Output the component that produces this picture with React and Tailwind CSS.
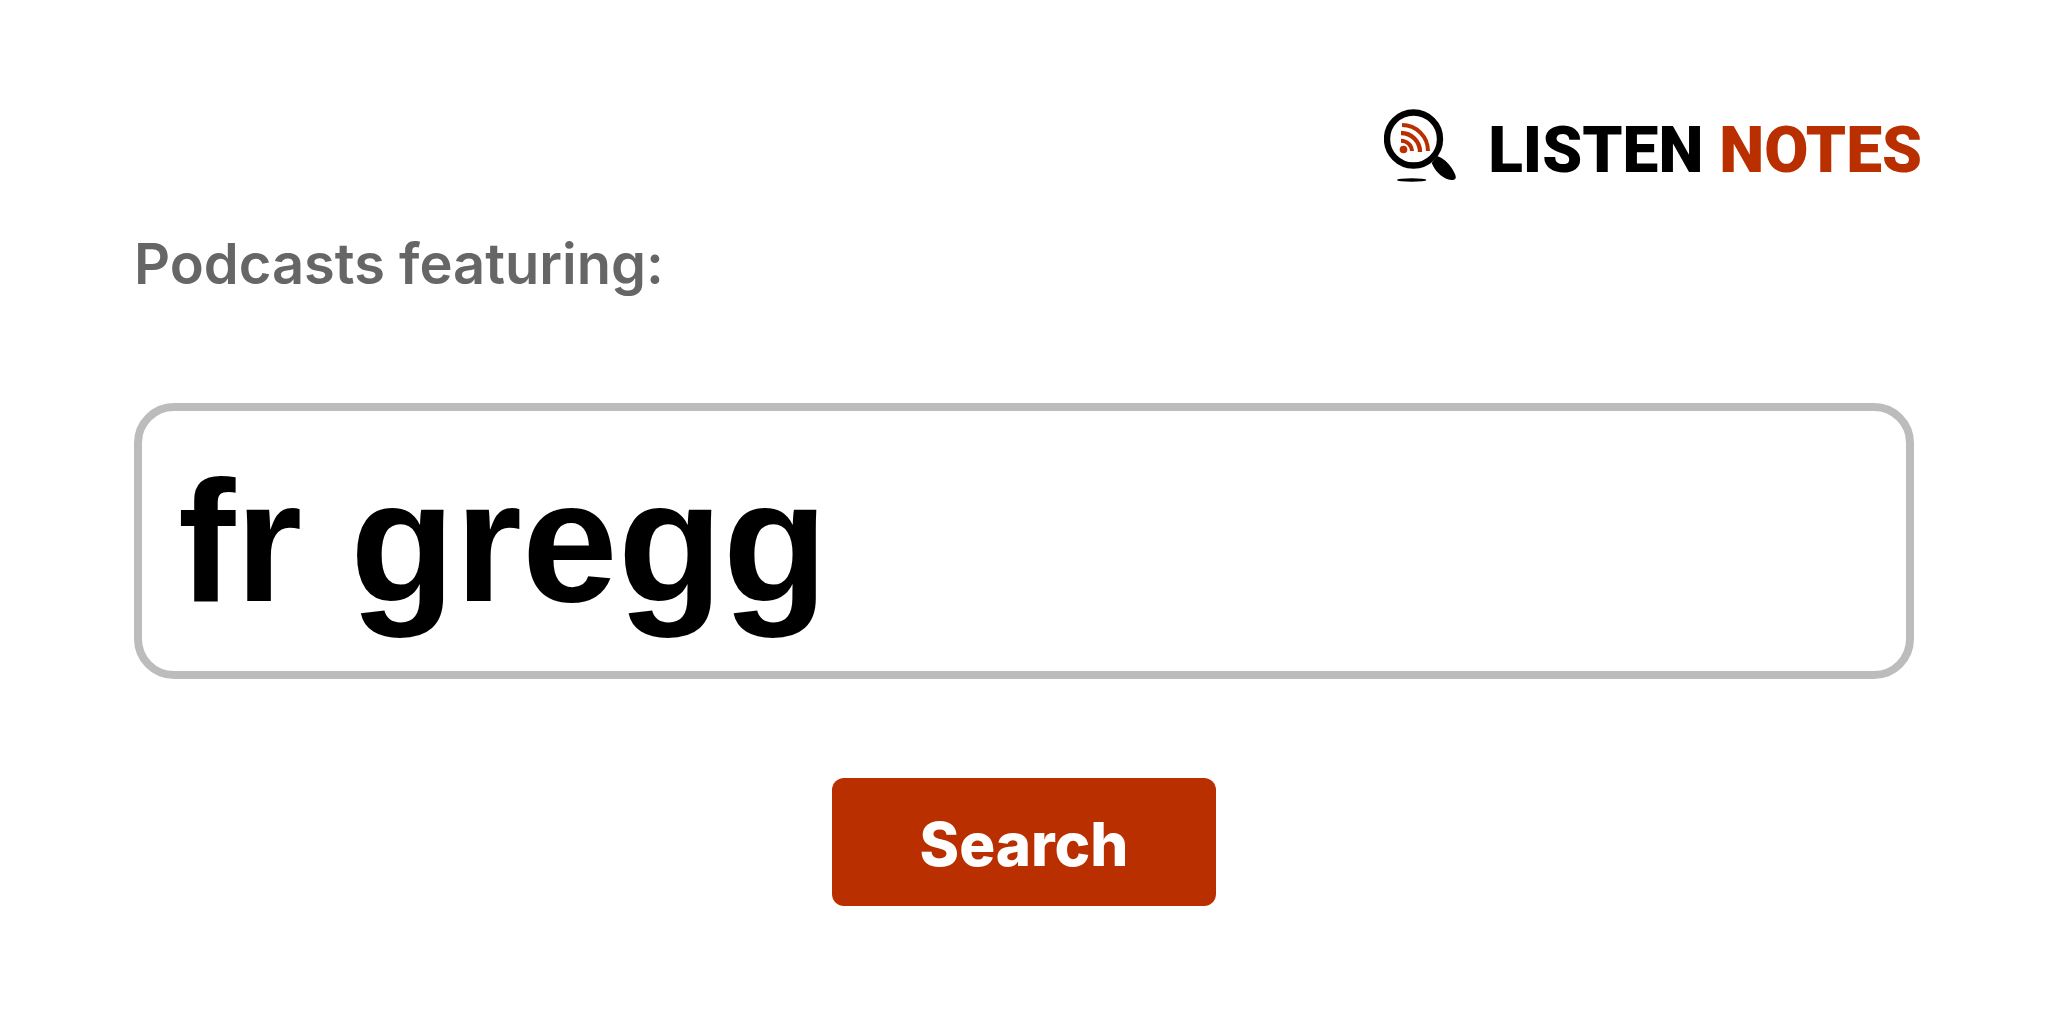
import React, { useState } from "react";

const LogoMark = () => (
  <svg viewBox="42 42 216 222" className="h-[74px] w-[72px]" aria-hidden="true">
    <circle cx="130.5" cy="132" r="79.5" fill="none" stroke="#000" strokeWidth="19" />
    {/* Handle */}
    <path
      d="M185 204 L202 183 C219 190 235 203 245 219 C253 232 259 243 257 249 C255 256 244 257 233 253 C213 245 196 229 185 204 Z"
      fill="#000"
    />
    {/* Feed waves */}
    <g fill="none" stroke="#b92f00" strokeWidth="12">
      <path d="M96 90 A78 78 0 0 1 174 168" />
      <path d="M93 114 A57 57 0 0 1 150 171" strokeWidth="13" />
      <path d="M93 137 A33 33 0 0 1 126 168" />
    </g>
    <circle cx="100.5" cy="163.5" r="11.5" fill="#b92f00" />
    {/* Shadow */}
    <ellipse cx="125" cy="255" rx="44" ry="5" fill="#000" />
  </svg>
);

const Logo = () => (
  <a href="#" className="flex items-end gap-8">
    <LogoMark />
    <span className="whitespace-nowrap font-[Roboto,sans-serif] text-[64px] leading-[64px] font-black text-black">
      LISTEN <span className="text-[#b92f00]">NOTES</span>
    </span>
  </a>
);

const App = () => {
  const [query, setQuery] = useState("fr gregg");

  return (
    <div className="min-h-screen bg-white font-[Inter,sans-serif]">
      <header className="flex justify-end px-[126px] pt-[109px]">
        <Logo />
      </header>

      <form className="flex flex-col px-[134px] pt-[45px]" onSubmit={(e) => e.preventDefault()}>
        <label htmlFor="query" className="text-[56px] leading-[72px] font-semibold text-[#666]">
          Podcasts featuring:
        </label>
        <input
          id="query"
          type="text"
          value={query}
          onChange={(e) => setQuery(e.target.value)}
          className="mt-[103px] h-[276px] w-full rounded-[40px] border-8 border-[#bcbcbc] bg-white px-9 font-['Liberation_Sans',sans-serif] text-[172px] font-bold text-black outline-none"
        />
        <button
          type="submit"
          className="mt-[99px] h-32 w-96 self-center rounded-xl bg-[#b92f00] pt-1 text-[60px] font-extrabold text-white"
        >
          Search
        </button>
      </form>
    </div>
  );
};

export default App;
